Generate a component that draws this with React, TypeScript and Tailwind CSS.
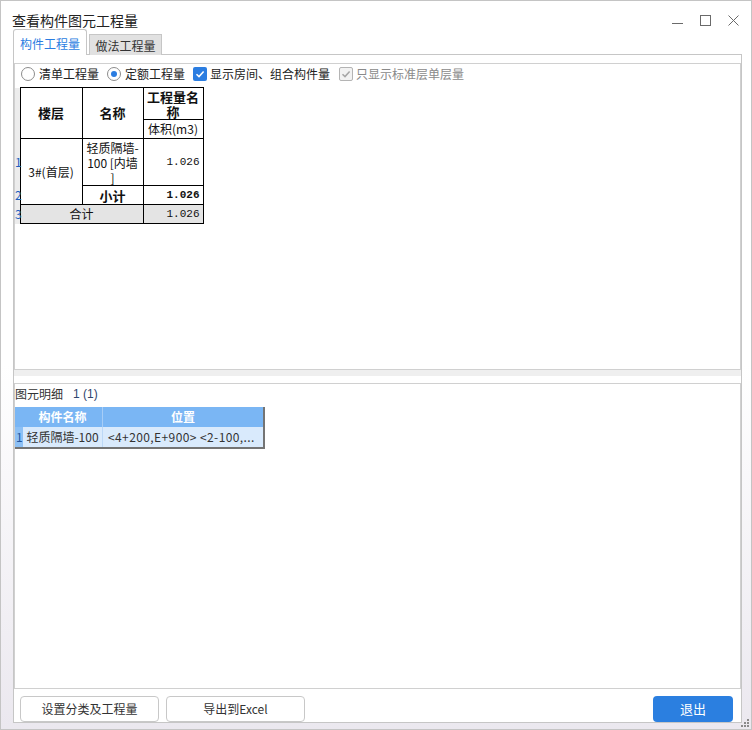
import { ReactNode } from "react";

const cjk = "font-['Noto_Sans_CJK_SC',sans-serif]";

function Radio({ checked, children }: { checked?: boolean; children: ReactNode }) {
	return (
		<div className="flex items-center">
			<span className="w-[14px] h-[14px] rounded-full border border-[#8c8c8c] bg-white flex items-center justify-center">
				{checked && <span className="w-[6px] h-[6px] rounded-full bg-[#2b7de1]" />}
			</span>
			<span className="ml-[4px] text-[12px] leading-[14px] text-[#222]">{children}</span>
		</div>
	)
}

function Check({ disabled, children }: { disabled?: boolean; children: ReactNode }) {
	return (
		<div className="flex items-center">
			<span className={`w-[14px] h-[14px] rounded-[2px] flex items-center justify-center ${disabled ? "border border-[#b4b4b4] bg-[#f2f2f2]" : "bg-[#2b7de1]"}`}>
				<svg width="10" height="10" viewBox="0 0 10 10" fill="none">
					<path d="M1.5 5.2 L4 7.6 L8.6 2.4" stroke={disabled ? "#a6a6a6" : "#fff"} strokeWidth="1.5" />
				</svg>
			</span>
			<span className={`ml-[3px] text-[12px] leading-[14px] ${disabled ? "text-[#8a8a8a]" : "text-[#222]"}`}>{children}</span>
		</div>
	)
}

function Button({ children, className }: { children: ReactNode; className: string }) {
	return (
		<div className={`h-[26px] rounded-[4px] flex items-center justify-center text-[12px] ${className}`}>
			{children}
		</div>
	)
}

export default function App() {
	const cell = "border border-black";
	const num = "font-['Liberation_Mono',monospace] text-[11px] text-right pr-[3px]";
	const rowHead = "bg-[#ececec] text-[12px] text-[#1f5fbf] align-middle pl-0 leading-none";

	return (
		<div className={`relative w-[752px] h-[730px] border border-[#c4c4c4] bg-linear-to-b from-white via-white to-[#ebe8ef] overflow-hidden flex flex-col ${cjk}`}>
			{/* title bar */}
			<div className="h-[28px] flex justify-between">
				<span className="ml-[11px] mt-[10px] text-[14px] leading-[18px] text-[#222]">查看构件图元工程量</span>
				<div className="flex items-start mt-[14px] mr-[12px] gap-[17px]">
					<svg width="11" height="11" viewBox="0 0 11 11"><path d="M0 8.5 H11" stroke="#6a6a6a" strokeWidth="1" /></svg>
					<svg width="11" height="11" viewBox="0 0 11 11"><rect x="0.5" y="0.5" width="10" height="10" fill="none" stroke="#6a6a6a" strokeWidth="1" /></svg>
					<svg width="11" height="11" viewBox="0 0 11 11"><path d="M0.5 0.5 L10.5 10.5 M10.5 0.5 L0.5 10.5" stroke="#6a6a6a" strokeWidth="1" /></svg>
				</div>
			</div>

			{/* tabs */}
			<div className="h-[26px] pl-[12px] flex items-end relative z-10">
				<div className="w-[74px] h-[26px] border border-b-0 border-[#c6c6c6] bg-white rounded-t-[3px] flex items-center justify-center text-[12px] text-[#2b7de1] pt-[2px]">
					构件工程量
				</div>
				<div className="ml-[2px] w-[73px] h-[21px] border border-b-0 border-[#c6c6c6] bg-[#e1e1e1] flex items-center justify-center text-[12px] text-[#333] pt-[1px]">
					做法工程量
				</div>
			</div>

			{/* tab page */}
			<div className="ml-[12px] w-[729px] h-[669px] -mt-px border border-[#c6c6c6] bg-white flex flex-col">
				<div className="h-[8px]" />
				{/* upper panel */}
				<div className="h-[307px] border border-[#d0d0d0] flex flex-col">
					<div className="h-[20px] pl-[6px] flex items-center gap-[8px]">
						<Radio>清单工程量</Radio>
						<Radio checked>定额工程量</Radio>
						<Check>显示房间、组合构件量</Check>
						<div className="ml-[1px]">
							<Check disabled>只显示标准层单层量</Check>
						</div>
					</div>
					<div className="mt-[3px]">
						<table className="table-fixed border-collapse w-[188px] text-[12px] text-[#111]">
							<colgroup>
								<col className="w-[5px]" />
								<col className="w-[62px]" />
								<col className="w-[61px]" />
								<col className="w-[60px]" />
							</colgroup>
							<tbody>
								<tr className="h-[32px]">
									<td className={rowHead} />
									<td rowSpan={2} className={`${cell} text-center font-bold text-[13px]`}>楼层</td>
									<td rowSpan={2} className={`${cell} text-center font-bold text-[13px]`}>名称</td>
									<td className={`${cell} text-center font-bold text-[13px] leading-[15px]`}>
										<div>工程量名</div>
										<div>称</div>
									</td>
								</tr>
								<tr className="h-[19px]">
									<td className={rowHead} />
									<td className={`${cell} text-center leading-none`}>体积(m3)</td>
								</tr>
								<tr className="h-[47px]">
									<td className={rowHead}>1</td>
									<td rowSpan={2} className={`${cell} text-center leading-none`}>3#(首层)</td>
									<td className={`${cell} text-center leading-[15px]`}>
										<div>轻质隔墙-</div>
										<div>100 [内墙</div>
										<div>]</div>
									</td>
									<td className={`${cell} ${num}`}>1.026</td>
								</tr>
								<tr className="h-[19px]">
									<td className={rowHead}>2</td>
									<td className={`${cell} text-center font-bold text-[13px] leading-none`}>小计</td>
									<td className={`${cell} ${num} font-bold`}>1.026</td>
								</tr>
								<tr className="h-[19px]">
									<td className={rowHead}>3</td>
									<td colSpan={2} className={`${cell} bg-[#e4e4e4] text-center leading-none`}>合计</td>
									<td className={`${cell} ${num} bg-[#e4e4e4]`}>1.026</td>
								</tr>
							</tbody>
						</table>
					</div>
				</div>

				{/* splitter */}
				<div className="h-[6px] bg-[#efefef]" />
				<div className="h-[7px]" />

				{/* lower panel */}
				<div className="h-[306px] border border-[#d0d0d0] flex flex-col">
					<div className="h-[20px] flex items-center text-[12px] leading-none">
						<span className="text-[#333]">图元明细</span>
						<span className="ml-[10px] text-[#30456e] font-['Liberation_Sans',sans-serif] text-[12px]">1 (1)</span>
					</div>
					<div className="mt-[3px] w-[250px] border-r-2 border-b-2 border-[#747474]">
						<div className="h-[20px] flex bg-[#7ab6f4] text-white font-bold text-[12px]">
							<div className="w-[8px]" />
							<div className="w-[80px] flex items-center justify-center border-r border-[#a6cdf7]">构件名称</div>
							<div className="flex-1 flex items-center justify-center">位置</div>
						</div>
						<div className="h-[20px] flex bg-[#d9eafc] text-[12px] text-[#333]">
							<div className="w-[8px] bg-[#8cc0f5] text-[#24569e] flex items-center pl-[1px]">1</div>
							<div className="w-[80px] flex items-center justify-center border-r border-[#bcd8f6]">轻质隔墙-100</div>
							<div className="flex-1 flex items-center pl-[5px] tracking-[0.4px] whitespace-nowrap overflow-hidden">&lt;4+200,E+900&gt; &lt;2-100,...</div>
						</div>
					</div>
				</div>

				{/* buttons */}
				<div className="pt-[7px] flex">
					<Button className="ml-[6px] w-[139px] border border-[#c8c8c8] bg-white text-[#333]">设置分类及工程量</Button>
					<Button className="ml-[7px] w-[139px] border border-[#c8c8c8] bg-white text-[#333]">导出到Excel</Button>
					<Button className="ml-auto mr-[8px] w-[80px] bg-[#2b7fe0] text-white text-[13px]">退出</Button>
				</div>
			</div>

			{/* resize grip */}
			<svg className="absolute right-[1px] bottom-[1px]" width="9" height="9" viewBox="0 0 9 9" fill="#8a8a8a">
				<rect x="6" y="0" width="2" height="2" />
				<rect x="3" y="3" width="2" height="2" />
				<rect x="6" y="3" width="2" height="2" />
				<rect x="0" y="6" width="2" height="2" />
				<rect x="3" y="6" width="2" height="2" />
				<rect x="6" y="6" width="2" height="2" />
			</svg>
		</div>
	)
}
